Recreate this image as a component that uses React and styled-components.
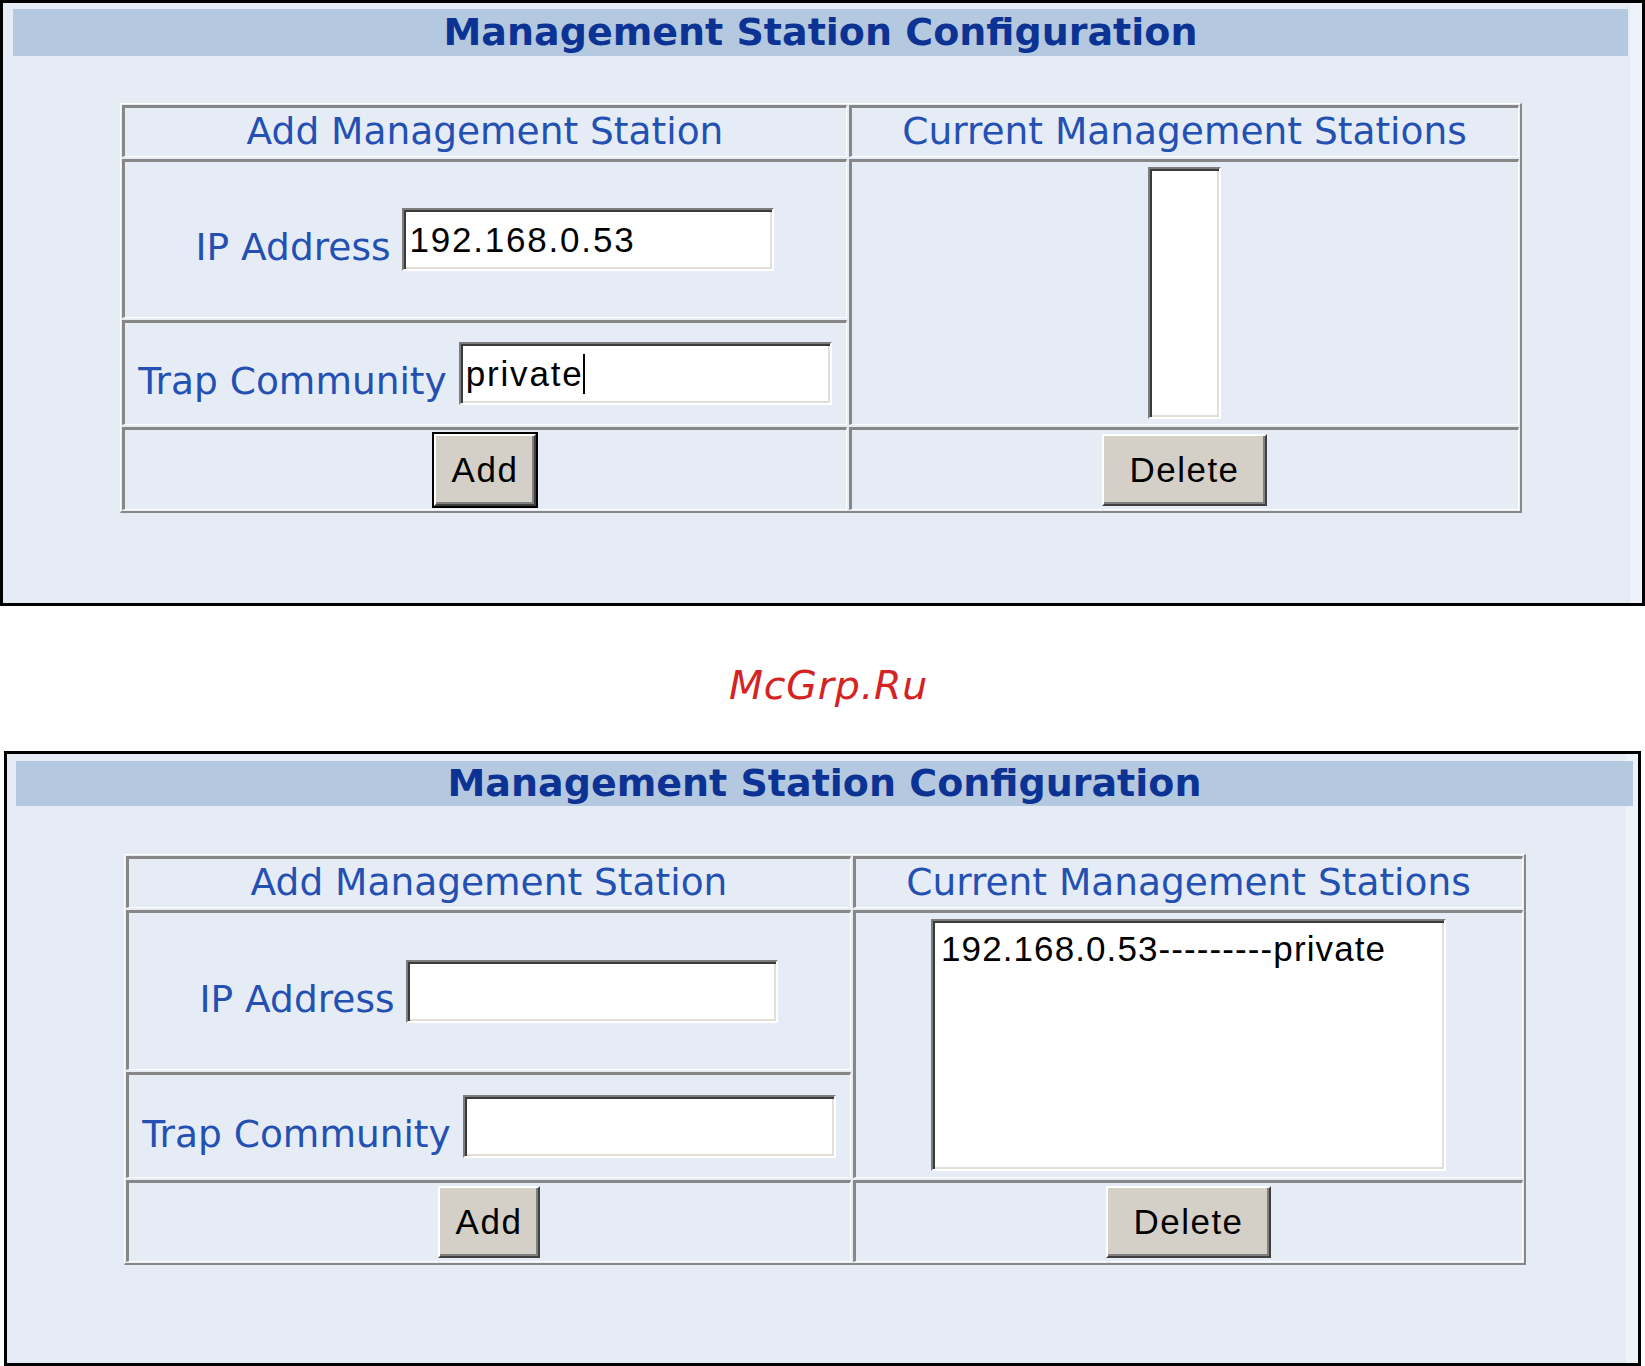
import React from "react";
import styled, { createGlobalStyle } from "styled-components";

const GlobalStyle = createGlobalStyle`
  html, body { margin: 0; padding: 0; background: #ffffff; }
  body { font-family: "DejaVu Sans", Verdana, sans-serif; }
  * { box-sizing: border-box; }
`;

const Page = styled.div`
  width: 1645px;
  display: flex;
  flex-direction: column;
`;

const Panel = styled.section`
  width: ${(p) => p.$width}px;
  height: ${(p) => p.$height}px;
  margin-left: ${(p) => p.$left}px;
  border: 3px solid #000;
  background: #e6ecf5;
  padding: ${(p) => p.$padTop}px ${(p) => p.$padRight}px 0 ${(p) => p.$padLeft}px;
  box-shadow: inset -12px 0 0 #eef2f9;
  display: flex;
  flex-direction: column;
  align-items: center;
`;

const TitleBar = styled.h1`
  margin: 0;
  width: 100%;
  height: ${(p) => p.$height}px;
  background: #b4c9e0;
  color: #0c3394;
  font-family: "DejaVu Sans", Verdana, sans-serif;
  font-weight: bold;
  font-size: 38px;
  line-height: ${(p) => p.$height}px;
  text-align: center;
  white-space: nowrap;
`;

const Table = styled.div`
  margin-top: ${(p) => p.$top}px;
  display: grid;
  grid-template-columns: 725px 670px;
  grid-template-rows: 52px ${(p) => p.$rows};
  gap: 2px;
  padding: 1px;
  border-top: 1px solid #ffffff;
  border-left: 1px solid #ffffff;
  border-bottom: 2px solid #888888;
  border-right: 2px solid #888888;
`;

const Cell = styled.div`
  border-top: 3px solid #878787;
  border-left: 3px solid #878787;
  border-bottom: 1px solid #ffffff;
  border-right: 1px solid #ffffff;
  display: flex;
  align-items: center;
  justify-content: center;
  grid-column: ${(p) => p.$col || "auto"};
  grid-row: ${(p) => p.$row || "auto"};
`;

const HeaderText = styled.span`
  color: #2350b2;
  font-family: "DejaVu Sans", Verdana, sans-serif;
  font-size: 37.5px;
  line-height: 1;
  white-space: nowrap;
`;

const FieldRow = styled.div`
  display: flex;
  align-items: flex-end;
  gap: 12px;
`;

const Label = styled.span`
  color: #2350b2;
  font-family: "DejaVu Sans", Verdana, sans-serif;
  font-size: 37.5px;
  line-height: 40px;
  padding-bottom: 4px;
  white-space: nowrap;
`;

const TextBox = styled.div`
  width: ${(p) => p.$width}px;
  height: 63px;
  background: #ffffff;
  border-top: 2px solid #7d7d7d;
  border-left: 2px solid #7d7d7d;
  border-bottom: 2px solid #ffffff;
  border-right: 2px solid #ffffff;
  box-shadow: inset 2px 2px 0 #3a3a3a, inset -2px -2px 0 #e2dfd8;
  padding: 0 0 0 5px;
  display: flex;
  align-items: center;
  font-family: "Liberation Sans", Arial, sans-serif;
  font-size: 35px;
  letter-spacing: 1.8px;
  color: #000;
  white-space: nowrap;
`;

const Caret = styled.span`
  display: inline-block;
  width: 2px;
  height: 40px;
  background: #000;
  margin-left: 0;
`;

const ListBox = styled.div`
  width: ${(p) => p.$width}px;
  height: 252px;
  background: #ffffff;
  border-top: 2px solid #7d7d7d;
  border-left: 2px solid #7d7d7d;
  border-bottom: 2px solid #ffffff;
  border-right: 2px solid #ffffff;
  box-shadow: inset 2px 2px 0 #3a3a3a, inset -2px -2px 0 #e2dfd8;
  padding: 6px 0 0 8px;
  font-family: "Liberation Sans", Arial, sans-serif;
  font-size: 35px;
  letter-spacing: 1.1px;
  line-height: 44px;
  color: #000;
  white-space: nowrap;
`;

const Button = styled.button`
  width: ${(p) => p.$width}px;
  height: 72px;
  padding: 0;
  background: #d4d0c8;
  font-family: "Liberation Sans", Arial, sans-serif;
  font-size: 35px;
  letter-spacing: 1.5px;
  color: #000;
  border-top: 2px solid #ffffff;
  border-left: 2px solid #ffffff;
  border-bottom: 2px solid #404040;
  border-right: 2px solid #404040;
  box-shadow: inset -2px -2px 0 #808080${(p) => (p.$default ? ", 0 0 0 2px #000" : "")};
  cursor: default;
`;

const Watermark = styled.div`
  height: 145px;
  display: flex;
  align-items: center;
  justify-content: center;
  padding: 12px 0 0 12px;
  color: #d52222;
  font-family: "DejaVu Sans", Verdana, sans-serif;
  font-style: italic;
  font-size: 39.5px;
  letter-spacing: 0.8px;
`;

function StationPanel({ geometry, ip, community, caret, stations, listWidth, defaultAdd }) {
  return (
    <Panel {...geometry}>
      <TitleBar $height={geometry.$titleHeight}>Management Station Configuration</TitleBar>
      <Table $top={geometry.$tableTop} $rows={geometry.$rows}>
        <Cell>
          <HeaderText>Add Management Station</HeaderText>
        </Cell>
        <Cell>
          <HeaderText>Current Management Stations</HeaderText>
        </Cell>
        <Cell>
          <FieldRow>
            <Label>IP Address</Label>
            <TextBox $width={372}>{ip}</TextBox>
          </FieldRow>
        </Cell>
        <Cell $col="2" $row="2 / span 2">
          <ListBox $width={listWidth}>
            {stations.map((s) => (
              <div key={s}>{s}</div>
            ))}
          </ListBox>
        </Cell>
        <Cell>
          <FieldRow>
            <Label>Trap Community</Label>
            <TextBox $width={373}>
              {community}
              {caret && <Caret />}
            </TextBox>
          </FieldRow>
        </Cell>
        <Cell>
          <Button $width={102} $default={defaultAdd}>Add</Button>
        </Cell>
        <Cell>
          <Button $width={165}>Delete</Button>
        </Cell>
      </Table>
    </Panel>
  );
}

export default function App() {
  return (
    <>
      <GlobalStyle />
      <Page>
        <StationPanel
          geometry={{
            $width: 1645,
            $height: 606,
            $left: 0,
            $padTop: 6,
            $padLeft: 10,
            $padRight: 14,
            $titleHeight: 47,
            $tableTop: 47,
            $rows: "159px 105px 83px",
          }}
          ip="192.168.0.53"
          community="private"
          caret
          stations={[]}
          listWidth={73}
          defaultAdd
        />
        <Watermark>McGrp.Ru</Watermark>
        <StationPanel
          geometry={{
            $width: 1637,
            $height: 615,
            $left: 4,
            $padTop: 7,
            $padLeft: 9,
            $padRight: 5,
            $titleHeight: 45,
            $tableTop: 48,
            $rows: "160px 106px 82px",
          }}
          ip=""
          community=""
          stations={["192.168.0.53---------private"]}
          listWidth={515}
        />
      </Page>
    </>
  );
}
